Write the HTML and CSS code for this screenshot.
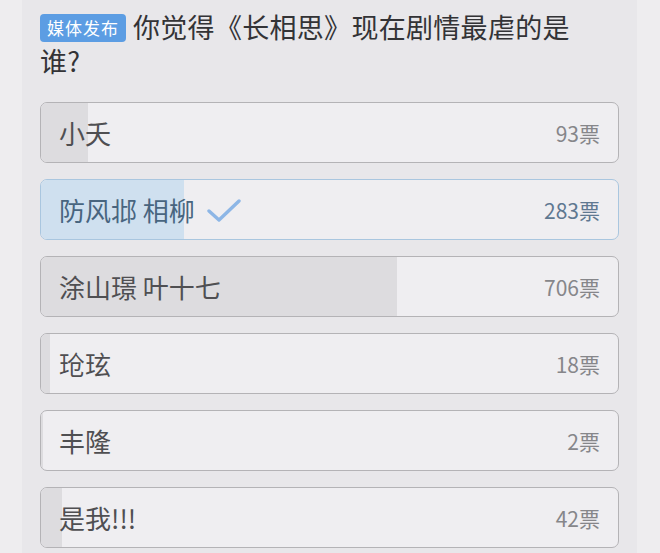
FILE: index.html
```html
<!DOCTYPE html>
<html lang="zh-CN">
<head>
  <meta charset="UTF-8">
  <meta name="viewport" content="width=device-width, initial-scale=1.0">
  <title>投票</title>
  <link rel="stylesheet" href="styles.css">
</head>
<body>
  <div class="card">
    <!-- Question -->
    <div class="question">
      <span class="badge">媒体发布</span>
      <h1 class="title">你觉得《长相思》现在剧情最虐的是谁?</h1>
    </div>

    <!-- Options -->
    <div class="options">
      <div class="option">
        <div class="fill" style="width: 8.1%"></div>
        <span class="name">小夭</span>
        <span class="count">93票</span>
      </div>
      <div class="option selected">
        <div class="fill" style="width: 24.7%"></div>
        <span class="name">防风邶 相柳
          <svg class="check" width="34" height="26" viewBox="0 0 34 26">
            <path d="M2 13 L12 22 L32 3" fill="none" stroke="#8db6e6" stroke-width="3.4" stroke-linecap="round" stroke-linejoin="round"/>
          </svg>
        </span>
        <span class="count">283票</span>
      </div>
      <div class="option">
        <div class="fill" style="width: 61.7%"></div>
        <span class="name">涂山璟 叶十七</span>
        <span class="count">706票</span>
      </div>
      <div class="option">
        <div class="fill" style="width: 1.6%"></div>
        <span class="name">玱玹</span>
        <span class="count">18票</span>
      </div>
      <div class="option">
        <div class="fill" style="width: 0.3%"></div>
        <span class="name">丰隆</span>
        <span class="count">2票</span>
      </div>
      <div class="option">
        <div class="fill" style="width: 3.7%"></div>
        <span class="name">是我!!!</span>
        <span class="count">42票</span>
      </div>
    </div>
  </div>
</body>
</html>
```

FILE: styles.css
```css
body {
  margin: 0;
  padding: 0;
  background: #eeedef;
  font-family: "Noto Sans CJK SC", "Noto Sans", sans-serif;
  overflow: hidden;
}
.card {
  margin: 0 23px 0 22px;
  padding: 10px 18px 0 18px;
  background: #e8e7ea;
  height: 553px;
  box-sizing: border-box;
}
.question {
  padding-right: 30px;
}
.title {
  margin: 0;
  font-size: 27px;
  font-weight: 400;
  line-height: 34px;
  color: #333336;
  letter-spacing: 0.3px;
}
.badge {
  float: left;
  margin: 4px 7px 0 0;
  background: #5c9de3;
  color: #fff;
  font-size: 17px;
  line-height: 28px;
  padding: 0 7px;
  border-radius: 4px;
  letter-spacing: 1px;
}
.options {
  margin-top: 24px;
  display: flex;
  flex-direction: column;
  gap: 16px;
}
.option {
  position: relative;
  display: flex;
  align-items: center;
  justify-content: space-between;
  height: 61px;
  padding: 0 18px 0 18px;
  background: #efeef1;
  border: 1.5px solid #b4b3b6;
  border-radius: 7px;
  box-sizing: border-box;
  overflow: hidden;
}
.fill {
  position: absolute;
  left: 0;
  top: 0;
  bottom: 0;
  background: #dddcdf;
}
.name {
  position: relative;
  display: flex;
  align-items: center;
  font-size: 26px;
  color: #4f4f52;
}
.count {
  position: relative;
  font-size: 21px;
  color: #86868a;
}
.selected {
  border-color: #a9c6df;
}
.selected .fill {
  background: #cfe0ef;
}
.selected .name {
  color: #48657f;
}
.selected .count {
  color: #5f7891;
}
.check {
  margin-left: 12px;
  margin-top: 2px;
}
```
